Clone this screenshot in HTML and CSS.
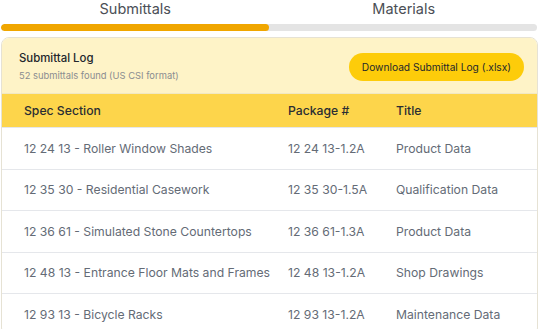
FILE: index.html
```html
<!DOCTYPE html>
<html lang="en">
<head>
<meta charset="UTF-8">
<meta name="viewport" content="width=device-width, initial-scale=1.0">
<title>Submittals</title>
<link rel="stylesheet" href="styles.css">
</head>
<body>
<div class="page">
    <div class="tabs">
        <a href="" class="tab active">Submittals</a>
        <a href="" class="tab">Materials</a>
    </div>
    <div class="progress">
        <div class="progress_fill" style="width: 50%;"></div>
    </div>

    <div class="log_card">
        <div class="log_head">
            <div class="log_info">
                <h2>Submittal Log</h2>
                <p>52 submittals found (US CSI format)</p>
            </div>
            <button class="download">Download Submittal Log (.xlsx)</button>
        </div>

        <div class="log_table">
            <div class="row head">
                <span>Spec Section</span>
                <span>Package #</span>
                <span>Title</span>
            </div>
            <div class="row">
                <span>12 24 13 - Roller Window Shades</span>
                <span>12 24 13-1.2A</span>
                <span>Product Data</span>
            </div>
            <div class="row">
                <span>12 35 30 - Residential Casework</span>
                <span>12 35 30-1.5A</span>
                <span>Qualification Data</span>
            </div>
            <div class="row">
                <span>12 36 61 - Simulated Stone Countertops</span>
                <span>12 36 61-1.3A</span>
                <span>Product Data</span>
            </div>
            <div class="row">
                <span>12 48 13 - Entrance Floor Mats and Frames</span>
                <span>12 48 13-1.2A</span>
                <span>Shop Drawings</span>
            </div>
            <div class="row">
                <span>12 93 13 - Bicycle Racks</span>
                <span>12 93 13-1.2A</span>
                <span>Maintenance Data</span>
            </div>
        </div>
    </div>
</div>
</body>
</html>
```

FILE: styles.css
```css
* {margin: 0; padding: 0; box-sizing: border-box;}
body {
    font-family: Inter, "Noto Sans", sans-serif;
    background: #fff;
    overflow: hidden;
}
.page {
    width: 539px;
    padding: 0 1px;
}
.tabs {
    display: flex;
    height: 18px;
}
.tabs .tab {
    flex: 1;
    text-align: center;
    font-size: 14.5px;
    line-height: 18px;
    color: #4b4f56;
    text-decoration: none;
}
.progress {
    margin: 6px 1px 0 0;
    height: 7px;
    border-radius: 4px;
    background: #e4e4e4;
    overflow: hidden;
}
.progress_fill {
    height: 100%;
    background: #f0a600;
    border-radius: 4px;
}
.log_card {
    margin-top: 6px;
    border: 1px solid #e6e2d4;
    border-radius: 8px;
    overflow: hidden;
    background: #fff;
}
.log_head {
    display: flex;
    align-items: center;
    justify-content: space-between;
    height: 56px;
    padding: 2px 13px 0 17px;
    background: #fef3c7;
    border-bottom: 1px solid #f1e8c3;
}
.log_info h2 {
    font-size: 11.4px;
    font-weight: 500;
    line-height: 15px;
    color: #22262c;
}
.log_info p {
    margin-top: 3px;
    font-size: 9.4px;
    line-height: 13px;
    color: #8a8c90;
}
.download {
    height: 28px;
    padding: 0 13px;
    border: 0;
    border-radius: 14px;
    background: #fdcc0a;
    font-family: inherit;
    font-size: 10.2px;
    color: #24272c;
}
.log_table .row {
    display: grid;
    grid-template-columns: 264px 108px 1fr;
    align-items: center;
    height: 41.5px;
    padding-left: 22px;
    border-top: 1px solid #e5e7eb;
    font-size: 12.2px;
    color: #646b76;
}
.log_table .row.head {
    height: 33px;
    border-top: 0;
    background: #fdd54b;
    font-weight: 500;
    color: #2a2d33;
}
```
